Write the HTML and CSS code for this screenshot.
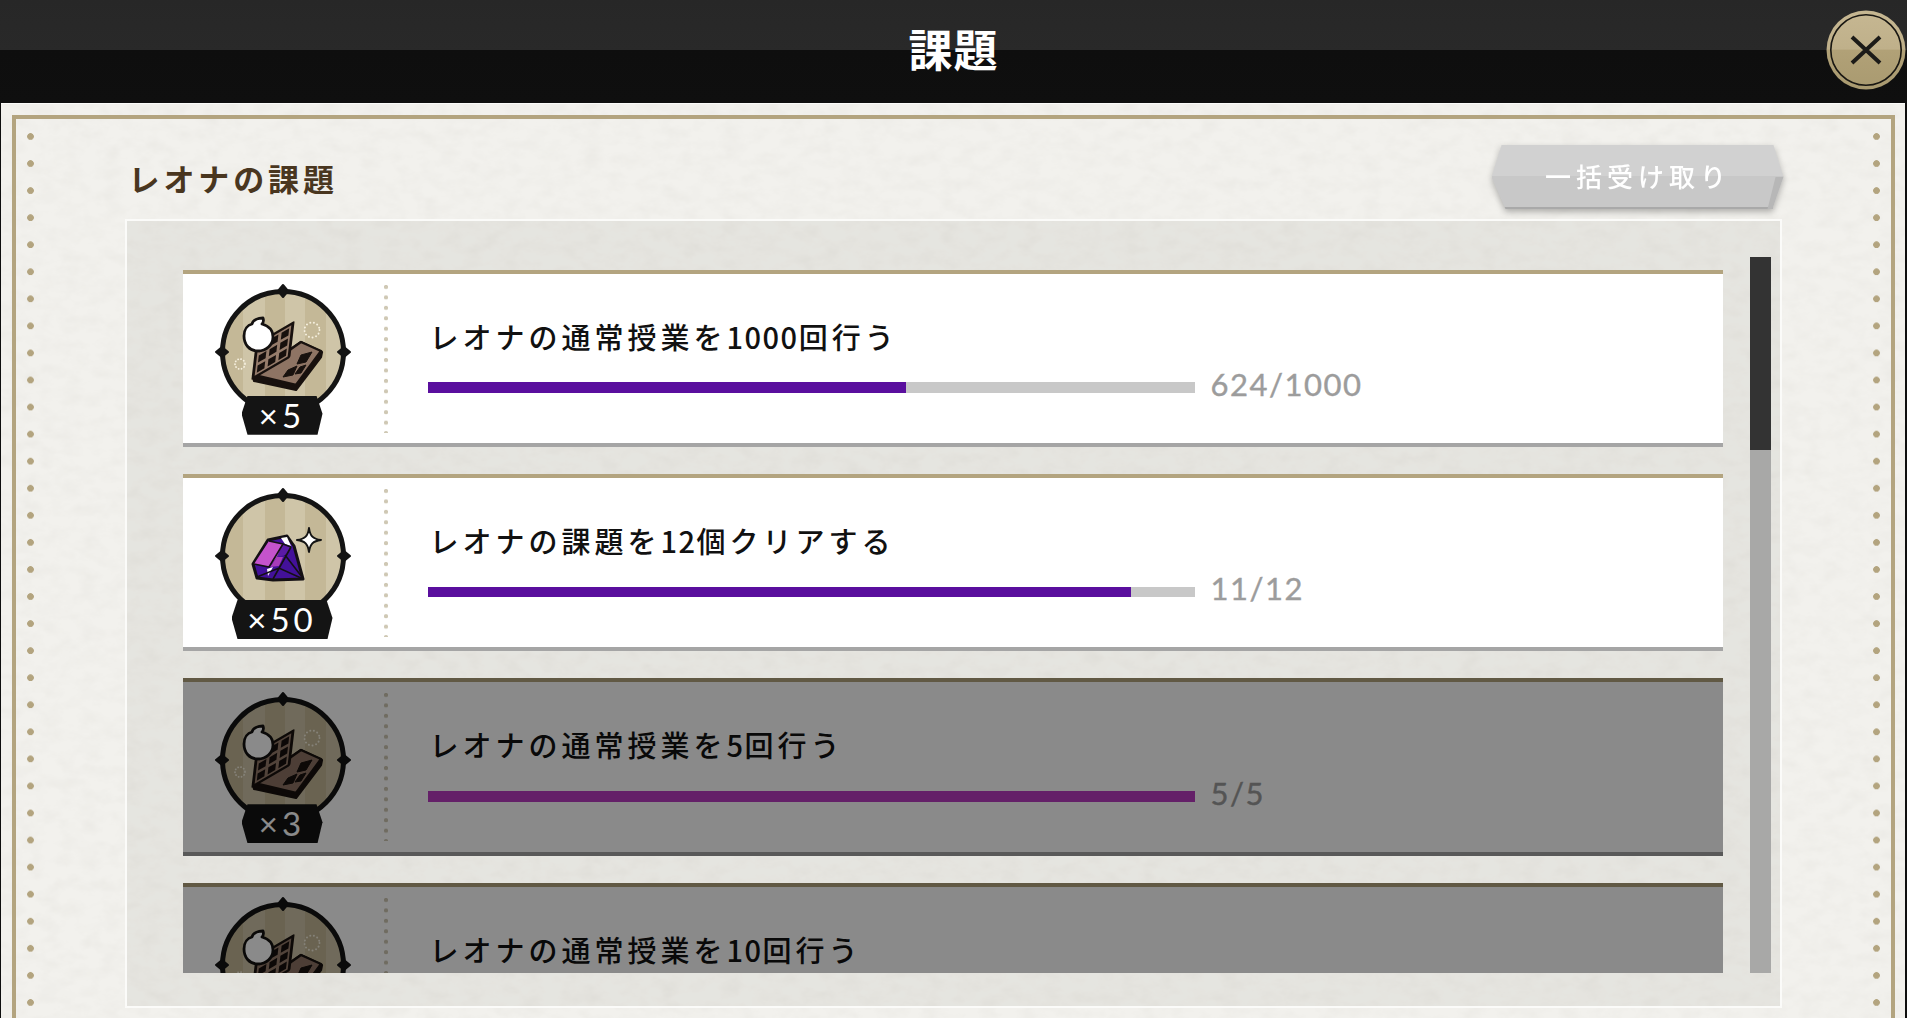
FILE: index.html
```html
<!DOCTYPE html>
<html lang="ja">
<head>
<meta charset="utf-8">
<title>課題</title>
<link rel="stylesheet" href="styles.css">
</head>
<body>
<svg class="defs" width="0" height="0" aria-hidden="true">
  <defs>
    <filter id="paper" x="0" y="0" width="100%" height="100%">
      <feTurbulence type="fractalNoise" baseFrequency="0.05 0.08" numOctaves="4" seed="7"/>
      <feColorMatrix type="matrix" values="0 0 0 0 0.35  0 0 0 0 0.33  0 0 0 0 0.28  0.09 0.09 0 0 -0.075"/>
    </filter>
    <clipPath id="disc"><circle cx="70" cy="70" r="60"/></clipPath>
    <symbol id="medal-base" viewBox="0 0 140 160">
      <circle cx="70" cy="70" r="60" fill="#cfc5a8"/>
      <g clip-path="url(#disc)" fill="#c4b897">
        <rect x="8" y="0" width="22" height="140"/>
        <rect x="52" y="0" width="20" height="140"/>
        <rect x="92" y="0" width="21" height="140"/>
      </g>
      <circle cx="70" cy="70" r="60.5" fill="none" stroke="#141414" stroke-width="5"/>
      <g fill="#141414" stroke="#141414" stroke-width="2" stroke-linejoin="round">
        <path d="M70 3 L75 9 L70 15 L65 9 Z"/>
        <path d="M3 70 L9 65 L15 70 L9 75 Z"/>
        <path d="M125 70 L131 65 L137 70 L131 75 Z"/>
      </g>
    </symbol>
    <symbol id="waffle" viewBox="0 0 140 160">
      <g fill="none" stroke="#f6f0df" stroke-linecap="round">
        <circle cx="99" cy="48" r="7.5" stroke-width="1.9" stroke-dasharray="0.1 3.6"/>
        <circle cx="27" cy="82" r="5" stroke-width="1.8" stroke-dasharray="0.1 2.9"/>
      </g>
      <g stroke="#18110e" stroke-linejoin="round">
        <path d="M88 60 L109 70 L108 75 L83 108 L41 99 L40 93 Z" fill="#18110e" stroke-width="2.2"/>
        <path d="M88 60 L108 69 L83 103 L41 93 Z" fill="#8e7464" stroke-width="2.4"/>
        <path d="M88 73 L99 70 L93 80 L84 82 Z M75 88 L84 84 L80 93 L70 95 Z" fill="#18110e" stroke-width="1"/>
        <path d="M87 85 L93 83 L88 91 L82 92 Z" fill="#18110e" stroke-width="1"/>
        <g transform="matrix(1 -0.583 -0.111 0.944 44 62)">
          <rect x="0" y="0" width="36" height="36" fill="#967c6b" stroke-width="3"/>
          <g fill="#17100d" stroke="none">
            <rect x="3.4" y="3.4" width="7.6" height="7.6"/><rect x="14.2" y="3.4" width="7.6" height="7.6"/><rect x="25" y="3.4" width="7.6" height="7.6"/>
            <rect x="3.4" y="14.2" width="7.6" height="7.6"/><rect x="14.2" y="14.2" width="7.6" height="7.6"/><rect x="25" y="14.2" width="7.6" height="7.6"/>
            <rect x="3.4" y="25" width="7.6" height="7.6"/><rect x="14.2" y="25" width="7.6" height="7.6"/><rect x="25" y="25" width="7.6" height="7.6"/>
          </g>
        </g>
      </g>
      <path class="cream" d="M50 36 C51 39 50 41 49 42 C56 44 60 49 60 55 C60 63 53 69 45 69 C36 69 31 62 31 54 C31 47 35 43 39 42 C40 38 45 36 50 36 Z" stroke="#141110" stroke-width="2.8" stroke-linejoin="round"/>
    </symbol>
    <symbol id="gem" viewBox="0 0 140 160">
      <path d="M55 54 L74 50 L81 60 L90 93 L60 94 L44 92 L40 78 Z" fill="#43119a" stroke="#141014" stroke-width="3" stroke-linejoin="round"/>
      <path d="M56 55 L70 58 L64 71 L56 81 L41 78 Z" fill="#c553cc"/>
      <path d="M70 58 L78 61 L72 69 L64 71 Z" fill="#5a1aa6"/>
      <path d="M64 71 L70 71 L66 80 L57 81 Z" fill="#a83cba"/>
      <path d="M68 52 L74 51 L78 60 L72 58 Z" fill="#fff"/>
      <path d="M54 83 L60 81 L55 90 Z" fill="#fff"/>
      <path d="M56 55 L70 58 L78 61 M70 58 L56 81 L41 78 M72 69 L89 91 M78 61 L60 93 M44 91 L66 82 L88 92" fill="none" stroke="#141014" stroke-width="1.6"/>
      <path d="M96 42 C97 50 100 53 108 54 C100 55 97 58 96 66 C95 58 92 55 84 54 C92 53 95 50 96 42 Z" fill="#fff" stroke="#141414" stroke-width="2" stroke-linejoin="round"/>
    </symbol>
    <linearGradient id="close-fill" x1="0" y1="0" x2="0" y2="1">
      <stop offset="0" stop-color="#c6b792"/>
      <stop offset="0.49" stop-color="#bfb08a"/>
      <stop offset="0.5" stop-color="#b1a177"/>
      <stop offset="1" stop-color="#a99a70"/>
    </linearGradient>
  </defs>
</svg>

<header class="topbar">
  <h1 class="topbar-title">課題</h1>
  <button class="close-btn" type="button" aria-label="閉じる">
    <svg class="close-icon" viewBox="0 0 80 80" width="80" height="80">
      <circle cx="40" cy="40" r="39.5" fill="url(#close-fill)"/>
      <circle cx="40" cy="40" r="35.2" fill="none" stroke="#191712" stroke-width="1.6"/>
      <path d="M26 27 L54 53 M54 27 L26 53" stroke="#1c1b18" stroke-width="4" fill="none"/>
    </svg>
  </button>
</header>

<main class="panel">
  <svg class="paper" aria-hidden="true"><rect width="100%" height="100%" filter="url(#paper)"/></svg>
  <div class="frame">
    <div class="dots"></div>
    <section class="content">
      <div class="heading">
        <h2 class="heading-title">レオナの課題</h2>
        <div class="claim-wrap"><button class="claim" type="button">一括受け取り</button></div>
      </div>
      <div class="board">
        <div class="list">

          <article class="task">
            <div class="medal">
              <svg class="medal-art" width="140" height="160"><use href="#medal-base"/><use href="#waffle"/></svg>
              <span class="qty qty-sm">×5</span>
            </div>
            <div class="task-main">
              <p class="task-title">レオナの通常授業を<span class="num">1000</span>回行う</p>
              <div class="progress">
                <div class="bar"><div class="fill" style="width:62.4%"></div></div>
                <span class="count">624/1000</span>
              </div>
            </div>
          </article>

          <article class="task">
            <div class="medal">
              <svg class="medal-art" width="140" height="160"><use href="#medal-base"/><use href="#gem"/></svg>
              <span class="qty qty-lg">×50</span>
            </div>
            <div class="task-main">
              <p class="task-title">レオナの課題を<span class="num">12</span>個クリアする</p>
              <div class="progress">
                <div class="bar"><div class="fill" style="width:91.7%"></div></div>
                <span class="count">11/12</span>
              </div>
            </div>
          </article>

          <article class="task task-done">
            <div class="medal">
              <svg class="medal-art" width="140" height="160"><use href="#medal-base"/><use href="#waffle"/></svg>
              <span class="qty qty-sm">×3</span>
            </div>
            <div class="task-main">
              <p class="task-title">レオナの通常授業を<span class="num">5</span>回行う</p>
              <div class="progress">
                <div class="bar"><div class="fill" style="width:100%"></div></div>
                <span class="count">5/5</span>
              </div>
            </div>
          </article>

          <article class="task task-done">
            <div class="medal">
              <svg class="medal-art" width="140" height="160"><use href="#medal-base"/><use href="#waffle"/></svg>
            </div>
            <div class="task-main">
              <p class="task-title">レオナの通常授業を<span class="num">10</span>回行う</p>
            </div>
          </article>

        </div>
        <div class="scrollbar"><div class="thumb"></div></div>
      </div>
    </section>
    <div class="dots"></div>
  </div>
</main>
</body>
</html>
```
FILE: styles.css
```css
* { box-sizing: border-box; }

html, body {
  margin: 0;
  height: 100%;
  overflow: hidden;
  background: #0e0e0e;
  font-family: "Noto Sans CJK JP", "Noto Sans", sans-serif;
}

.defs { position: absolute; }

/* top bar */
.topbar {
  position: relative;
  height: 103px;
  display: flex;
  align-items: center;
  justify-content: center;
  padding-bottom: 8px;
  background: linear-gradient(#272727 0, #292929 50px, #0e0e0e 50px, #0f0f0f 103px);
}

.topbar-title {
  margin: 0;
  color: #fff;
  font-size: 44px;
  font-weight: 700;
  line-height: 1;
  letter-spacing: 1px;
}

.close-btn {
  position: absolute;
  left: 1826px;
  top: 10px;
  width: 80px;
  height: 80px;
  padding: 0;
  border: 0;
  background: none;
}

.close-icon { display: block; }

/* panel */
.panel {
  position: relative;
  margin: 0 2px 0 1px;
  padding: 11px 10px 0 11px;
  height: 940px;
  background: #f2f1ed;
  border-top: 1px solid #fbfbf9;
}

.paper {
  position: absolute;
  left: 0;
  top: 0;
  width: 100%;
  height: 100%;
}

.frame {
  position: relative;
  display: flex;
  height: 920px;
  padding: 14px 11px 0 11px;
  border: 4.5px solid #b3a47f;
}

.dots {
  flex: none;
  width: 7px;
  background-image: radial-gradient(circle at 3.5px 3.5px, #b3a47f 3px, transparent 3.7px);
  background-size: 7px 27.07px;
  background-repeat: repeat-y;
}

.content {
  flex: 1;
  min-width: 0;
  padding: 0 91.5px 0 91px;
}

/* heading */
.heading {
  display: flex;
  align-items: flex-start;
  justify-content: space-between;
  height: 86px;
  padding-top: 12px;
}

.heading-title {
  margin: 13px 0 0 3.5px;
  color: #49361f;
  font-size: 31px;
  font-weight: 600;
  line-height: 40px;
  letter-spacing: 3.9px;
}

.claim-wrap {
  margin-right: -2px;
  filter: drop-shadow(0 3px 3px rgba(0, 0, 0, .28));
}

.claim {
  position: relative;
  display: block;
  width: 292px;
  height: 64px;
  padding: 0 0 2px 1px;
  border: 0;
  color: #fff;
  font: 500 26px/1 "Noto Sans CJK JP", sans-serif;
  letter-spacing: 5px;
  background: linear-gradient(#d1d1d1 0, #d1d1d1 49%, #c8c8c8 49%, #c8c8c8 97%, #a9a9a9 97%);
  clip-path: polygon(10px 0, 282px 0, 292px 50%, 281px 100%, 14px 100%, 0 50%);
}

.claim::after {
  content: "";
  position: absolute;
  inset: 0;
  background: #b7b7b7;
  clip-path: polygon(284px 50%, 292px 50%, 281px 100%, 276px 100%);
}

/* board */
.board {
  display: flex;
  align-items: flex-start;
  height: 789px;
  padding: 36px 0 0 55.5px;
  border: 2px solid #fbfbf9;
  background: rgba(70, 66, 50, .07);
}

.list {
  flex: none;
  display: flex;
  flex-direction: column;
  gap: 27px;
  width: 1540px;
  height: 716px;
  padding-top: 12.7px;
  overflow: hidden;
}

.scrollbar {
  flex: none;
  width: 21px;
  height: 716px;
  margin-left: 27px;
  background: #a8a8a7;
}

.thumb {
  height: 193px;
  background: #333;
}

/* task row */
.task {
  position: relative;
  flex: none;
  display: flex;
  height: 177.3px;
  background: #fff;
  border-top: 4px solid #b3a47f;
  border-bottom: 4px solid #a5a5a5;
}

.task-done::after {
  content: "";
  position: absolute;
  inset: -4px 0;
  background: rgba(0, 0, 0, .46);
}

.medal {
  position: relative;
  flex: none;
  width: 205px;
  padding: 8px 0 0 30px;
}

.medal::after {
  content: "";
  position: absolute;
  right: 0;
  top: 11px;
  width: 4px;
  height: 148px;
  background: radial-gradient(circle at 2px 2px, #cfc8b4 1.8px, transparent 2.4px) 0 0 / 4px 10.45px repeat-y;
}

.medal-art { display: block; }

.qty {
  position: absolute;
  top: 122px;
  height: 39px;
  display: flex;
  align-items: center;
  justify-content: center;
  color: #fff;
  background: #141414;
  font: 400 33px/1 Lato, "Noto Sans", sans-serif;
  letter-spacing: 4px;
}

.qty-sm {
  left: 59px;
  width: 81px;
  clip-path: polygon(6px 0, 75px 0, 81px 46%, 76px 100%, 6px 100%, 0 46%);
}

.qty-lg {
  left: 49px;
  width: 101px;
  clip-path: polygon(6px 0, 95px 0, 101px 46%, 96px 100%, 6px 100%, 0 46%);
}

.task-main {
  flex: 1;
  padding: 42px 0 0 40px;
}

.task-title {
  margin: 0 0 17px 2px;
  color: #111;
  font-size: 29px;
  font-weight: 500;
  line-height: 40px;
  letter-spacing: 4px;
  white-space: nowrap;
}

.num { letter-spacing: 1.5px; }

.progress {
  display: flex;
  align-items: center;
  height: 30px;
}

.bar {
  flex: none;
  width: 767px;
  height: 10.5px;
  background: #c8c8c8;
}

.fill {
  height: 100%;
  background: #5a0f9e;
}

.task-done .fill { background: #b93cc0; }

.count {
  margin: -6px 0 0 16px;
  color: #9c9c9c;
  font: 400 31px/1 Lato, "Noto Sans", sans-serif;
  letter-spacing: 1.5px;
  -webkit-text-stroke: .4px #9c9c9c;
}

.cream { fill: #fff; }
```
